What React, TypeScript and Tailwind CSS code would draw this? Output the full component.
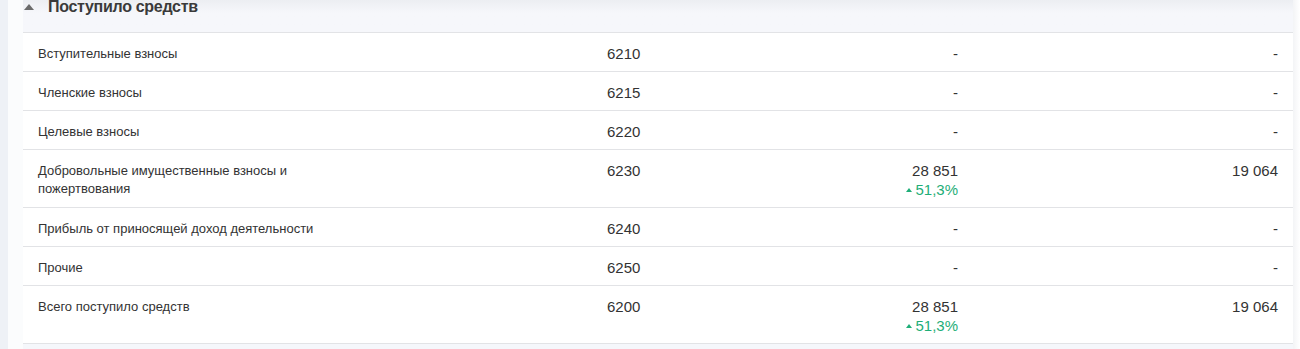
import React from "react";

type Row = {
  label: string[];
  code: string;
  v1: string;
  delta?: string;
  v2: string;
};

const rows: Row[] = [
  { label: ["Вступительные взносы"], code: "6210", v1: "-", v2: "-" },
  { label: ["Членские взносы"], code: "6215", v1: "-", v2: "-" },
  { label: ["Целевые взносы"], code: "6220", v1: "-", v2: "-" },
  {
    label: ["Добровольные имущественные взносы и", "пожертвования"],
    code: "6230",
    v1: "28 851",
    delta: "51,3%",
    v2: "19 064",
  },
  { label: ["Прибыль от приносящей доход деятельности"], code: "6240", v1: "-", v2: "-" },
  { label: ["Прочие"], code: "6250", v1: "-", v2: "-" },
  {
    label: ["Всего поступило средств"],
    code: "6200",
    v1: "28 851",
    delta: "51,3%",
    v2: "19 064",
  },
];

function Up() {
  return (
    <svg width="6" height="4" viewBox="0 0 6 4" className="inline-block mr-[3px] mb-[3px]">
      <path d="M0 4 L3 0 L6 4 Z" fill="#1fae78" />
    </svg>
  );
}

export default function App() {
  return (
    <div
      className="flex w-[1300px] h-[349px] overflow-hidden bg-white text-[#333]"
      style={{ fontFamily: "'Liberation Sans', Arial, sans-serif" }}
    >
      <div className="w-[8px] shrink-0 bg-[#eef1f6]" />
      <div className="w-[15px] shrink-0 bg-[#fbfcfd]" />
      <div className="w-[1270px] shrink-0 flex flex-col">
        <div className="h-[33px] shrink-0 flex items-start border-b border-[#e2e3e6] bg-gradient-to-b from-[#eceef2] to-[#f6f7fb] to-[40%]">
          <svg width="10" height="6" viewBox="0 0 10 6" className="ml-[1px] mt-[4px]">
            <path d="M0 6 L5 0 L10 6 Z" fill="#6b6b6b" />
          </svg>
          <span className="ml-[14px] -mt-[3px] text-[16px] leading-[20px] font-bold tracking-[-0.3px] text-[#3a3a3a]">
            Поступило средств
          </span>
        </div>
        {rows.map((r, i) => (
          <div
            key={i}
            className="grid grid-cols-[569px_200px_151px_320px] px-[15px] border-b border-[#e2e3e6] text-[13px] leading-[18px]"
          >
            <div className="pt-[12px] pb-[8px]">
              {r.label.map((l, j) => (
                <div key={j}>{l}</div>
              ))}
            </div>
            <div className="pt-[12px] text-[15px]">{r.code}</div>
            <div className="pt-[12px] pb-[8px] text-right text-[15px]">
              <div>{r.v1}</div>
              {r.delta && (
                <div className="leading-[19px] text-[#1fae78]">
                  <Up />
                  {r.delta}
                </div>
              )}
            </div>
            <div className="pt-[12px] text-right text-[15px]">{r.v2}</div>
          </div>
        ))}
        <div className="flex-1 bg-[#f5f7fb]" />
      </div>
      <div className="w-[7px] shrink-0 bg-gradient-to-r from-[#f3f4f6] to-white" />
    </div>
  );
}
